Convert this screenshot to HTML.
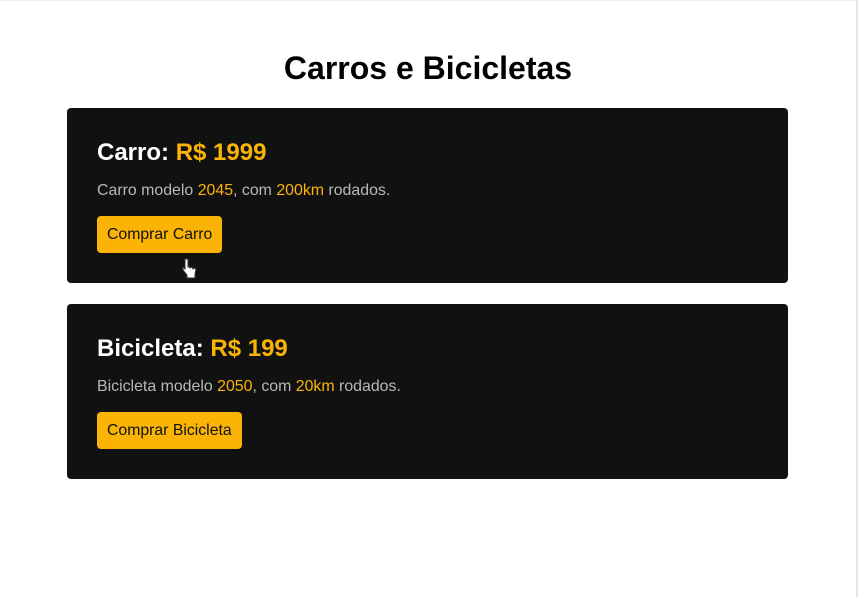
<!DOCTYPE html>
<html><head><style>
body{margin:0;width:858px;height:597px;background:#fff;font-family:"Liberation Sans",Arial,sans-serif;position:relative;overflow:hidden}
.edge{position:absolute;right:0;top:0;width:2px;height:597px;background:#e4e4e4}
.top{position:absolute;left:0;top:0;width:858px;height:1px;background:#eee}
h1{position:absolute;left:0;width:856px;top:50px;margin:0;text-align:center;font-size:32px;font-weight:bold;color:#000}
.card{position:absolute;left:67px;width:721px;height:175px;background:#111;border-radius:4px}
.card h2{position:absolute;left:30px;top:31px;margin:0;font-size:24px;color:#fff}
.y{color:#fbb406}
.card p{position:absolute;left:30px;top:74px;margin:0;font-size:15.9px;color:#b8b8b8}
.btn{position:absolute;left:30px;top:108px;height:37px;line-height:38px;padding:0 10px;background:#fbb406;border-radius:4px;font-size:15.8px;color:#111}
</style></head><body>
<div class="top"></div><div class="edge"></div>
<h1>Carros e Bicicletas</h1>
<div class="card" style="top:108px"><h2>Carro: <span class="y">R$ 1999</span></h2><p>Carro modelo <span class="y">2045</span>, com <span class="y">200km</span> rodados.</p><div class="btn">Comprar Carro</div></div>
<div class="card" style="top:304px"><h2>Bicicleta: <span class="y">R$ 199</span></h2><p>Bicicleta modelo <span class="y">2050</span>, com <span class="y">20km</span> rodados.</p><div class="btn">Comprar Bicicleta</div></div>
<svg style="position:absolute;left:182px;top:258px" width="16" height="26" viewBox="0 0 16 26"><path d="M3 1v10l-2-2v3l4 5v3h8v-4l1-5-2-1-1 1-1-2-2 1-1-2-1 1V1z" fill="#fff" stroke="#333" stroke-width="1"/></svg>
</body></html>
